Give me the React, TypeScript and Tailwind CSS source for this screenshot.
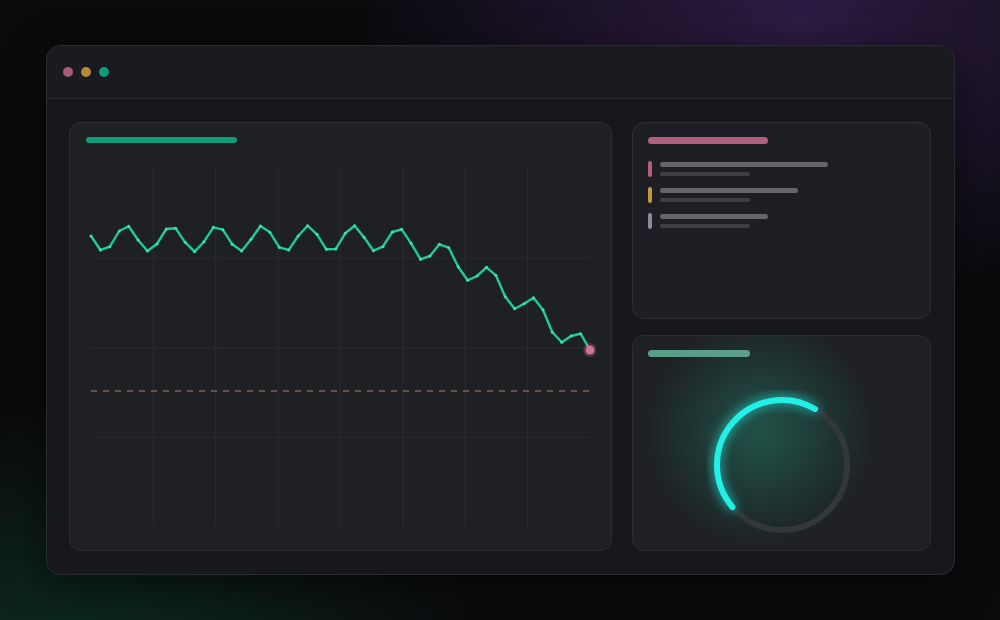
const pts: [number, number][] = [
  [236], [250], [246.7], [231], [226.3], [240], [251], [244], [229], [228.3],
  [242.3], [251.7], [241.7], [227.3], [229.7], [244.3], [251], [239.3], [226], [232.3],
  [247.3], [250], [236], [225.7], [234.3], [249.3], [249], [233.3], [225.7], [237.3],
  [250.7], [246.7], [232], [229.3], [243.3], [259.3], [256], [244.3], [247.7], [266.7],
  [280.3], [276], [267.3], [275.3], [296.7], [308.7], [303.7], [297.7], [309.7], [332.3],
  [342.3], [336], [333.7], [350],
].map(([y], i) => [91 + (i * 499) / 53, y]);

const xs = [1, 2, 3, 4, 5, 6, 7].map((k) => 91 + k * 62.375);
const ys = [257.75, 347.5, 437.25];

const items = [
  { color: "bg-[#b45d80]", w: "w-[168px]" },
  { color: "bg-[#c29a3d]", w: "w-[138px]" },
  { color: "bg-[#8a8d93]", w: "w-[108px]" },
];

function Chart() {
  return (
    <svg width="510" height="390" viewBox="86 150 510 390" className="mt-[7px] block">
      {xs.map((x) => (
        <line key={x} x1={x} x2={x} y1={168} y2={527} stroke="#292b30" strokeWidth="1" />
      ))}
      {ys.map((y) => (
        <line key={y} x1={91} x2={590} y1={y} y2={y} stroke="#292b30" strokeWidth="1" />
      ))}
      <line x1={91} x2={590} y1={391} y2={391} stroke="#a08959" strokeWidth="1" strokeDasharray="6 6" />
      <polyline
        points={pts.map((p) => p.join(",")).join(" ")}
        fill="none"
        stroke="#1fcb9c"
        strokeWidth="2.4"
        strokeLinejoin="round"
        strokeLinecap="round"
      />
      {pts.slice(0, -1).map(([x, y]) => (
        <circle key={x} cx={x} cy={y} r="1.5" fill="#3ee0b2" />
      ))}
      <circle cx={590} cy={350} r="7" fill="#d0708f" opacity="0.25" />
      <circle cx={590} cy={350} r="4.5" fill="#cf7392" />
    </svg>
  );
}

export default function App() {
  return (
    <div className="w-[1000px] h-[620px] overflow-hidden pl-[46px] pt-[45px] bg-[#0b0b0e] bg-[radial-gradient(ellipse_440px_280px_at_800px_20px,#2d1b43,transparent),radial-gradient(ellipse_420px_240px_at_60px_650px,#0b2a1f,transparent)]">
      <div className="w-[909px] h-[530px] rounded-[14px] border border-[#2a2b30] bg-[#17181b] shadow-[0_10px_40px_rgba(0,0,0,0.5)] flex flex-col">
        <div className="h-[53px] shrink-0 border-b border-[#2a2b30] flex items-center gap-[8px] pl-[16px] bg-[#1a1b1f] rounded-t-[13px]">
          <span className="w-[10px] h-[10px] rounded-full bg-[#a95b77]" />
          <span className="w-[10px] h-[10px] rounded-full bg-[#b58a3c]" />
          <span className="w-[10px] h-[10px] rounded-full bg-[#0f9c78]" />
        </div>
        <div className="grid grid-cols-[543px_299px] gap-[20px] pl-[22px] pt-[23px]">
          <div className="h-[429px] rounded-[12px] border border-[#2c2e33] bg-[#1e2024] px-[16px] pt-[14px] overflow-hidden">
            <div className="w-[151px] h-[6px] rounded-full bg-[#0f9c78]" />
            <Chart />
          </div>
          <div className="flex flex-col gap-[16px]">
            <div className="h-[197px] rounded-[12px] border border-[#2c2e33] bg-[#1e1f24] pl-[15px] pt-[14px]">
              <div className="w-[120px] h-[7px] rounded-full bg-[#b0607d]" />
              <div className="mt-[17px] flex flex-col gap-[10px]">
                {items.map((it, i) => (
                  <div key={i} className="flex gap-[8px]">
                    <span className={`w-[4px] h-[16px] rounded-full ${it.color}`} />
                    <div className="flex flex-col">
                      <span className={`mt-[1px] h-[5px] rounded-full bg-[#646669] ${it.w}`} />
                      <span className="mt-[5px] h-[4px] w-[90px] rounded-full bg-[#3d3f44]" />
                    </div>
                  </div>
                ))}
              </div>
            </div>
            <div className="h-[216px] rounded-[12px] border border-[#2c2e33] bg-[#1e2024] bg-[radial-gradient(circle_115px_at_43%_45%,rgba(34,125,102,0.55),transparent)] pl-[15px] pt-[14px] overflow-hidden">
              <div className="w-[102px] h-[7px] rounded-full bg-[#5c9d87]" />
              <div className="flex justify-center mt-[33px] pr-[15px]">
                <svg width="150" height="150" viewBox="0 0 150 150" className="block">
                  <circle cx="75" cy="75" r="65" fill="none" stroke="#33363a" strokeWidth="6" />
                  <path
                    d="M25.4 117 A65 65 0 0 1 108 19"
                    fill="none"
                    stroke="#22f0e6"
                    strokeWidth="6"
                    strokeLinecap="round"
                    className="drop-shadow-[0_0_6px_#1fe3d8]"
                  />
                </svg>
              </div>
            </div>
          </div>
        </div>
      </div>
    </div>
  );
}
